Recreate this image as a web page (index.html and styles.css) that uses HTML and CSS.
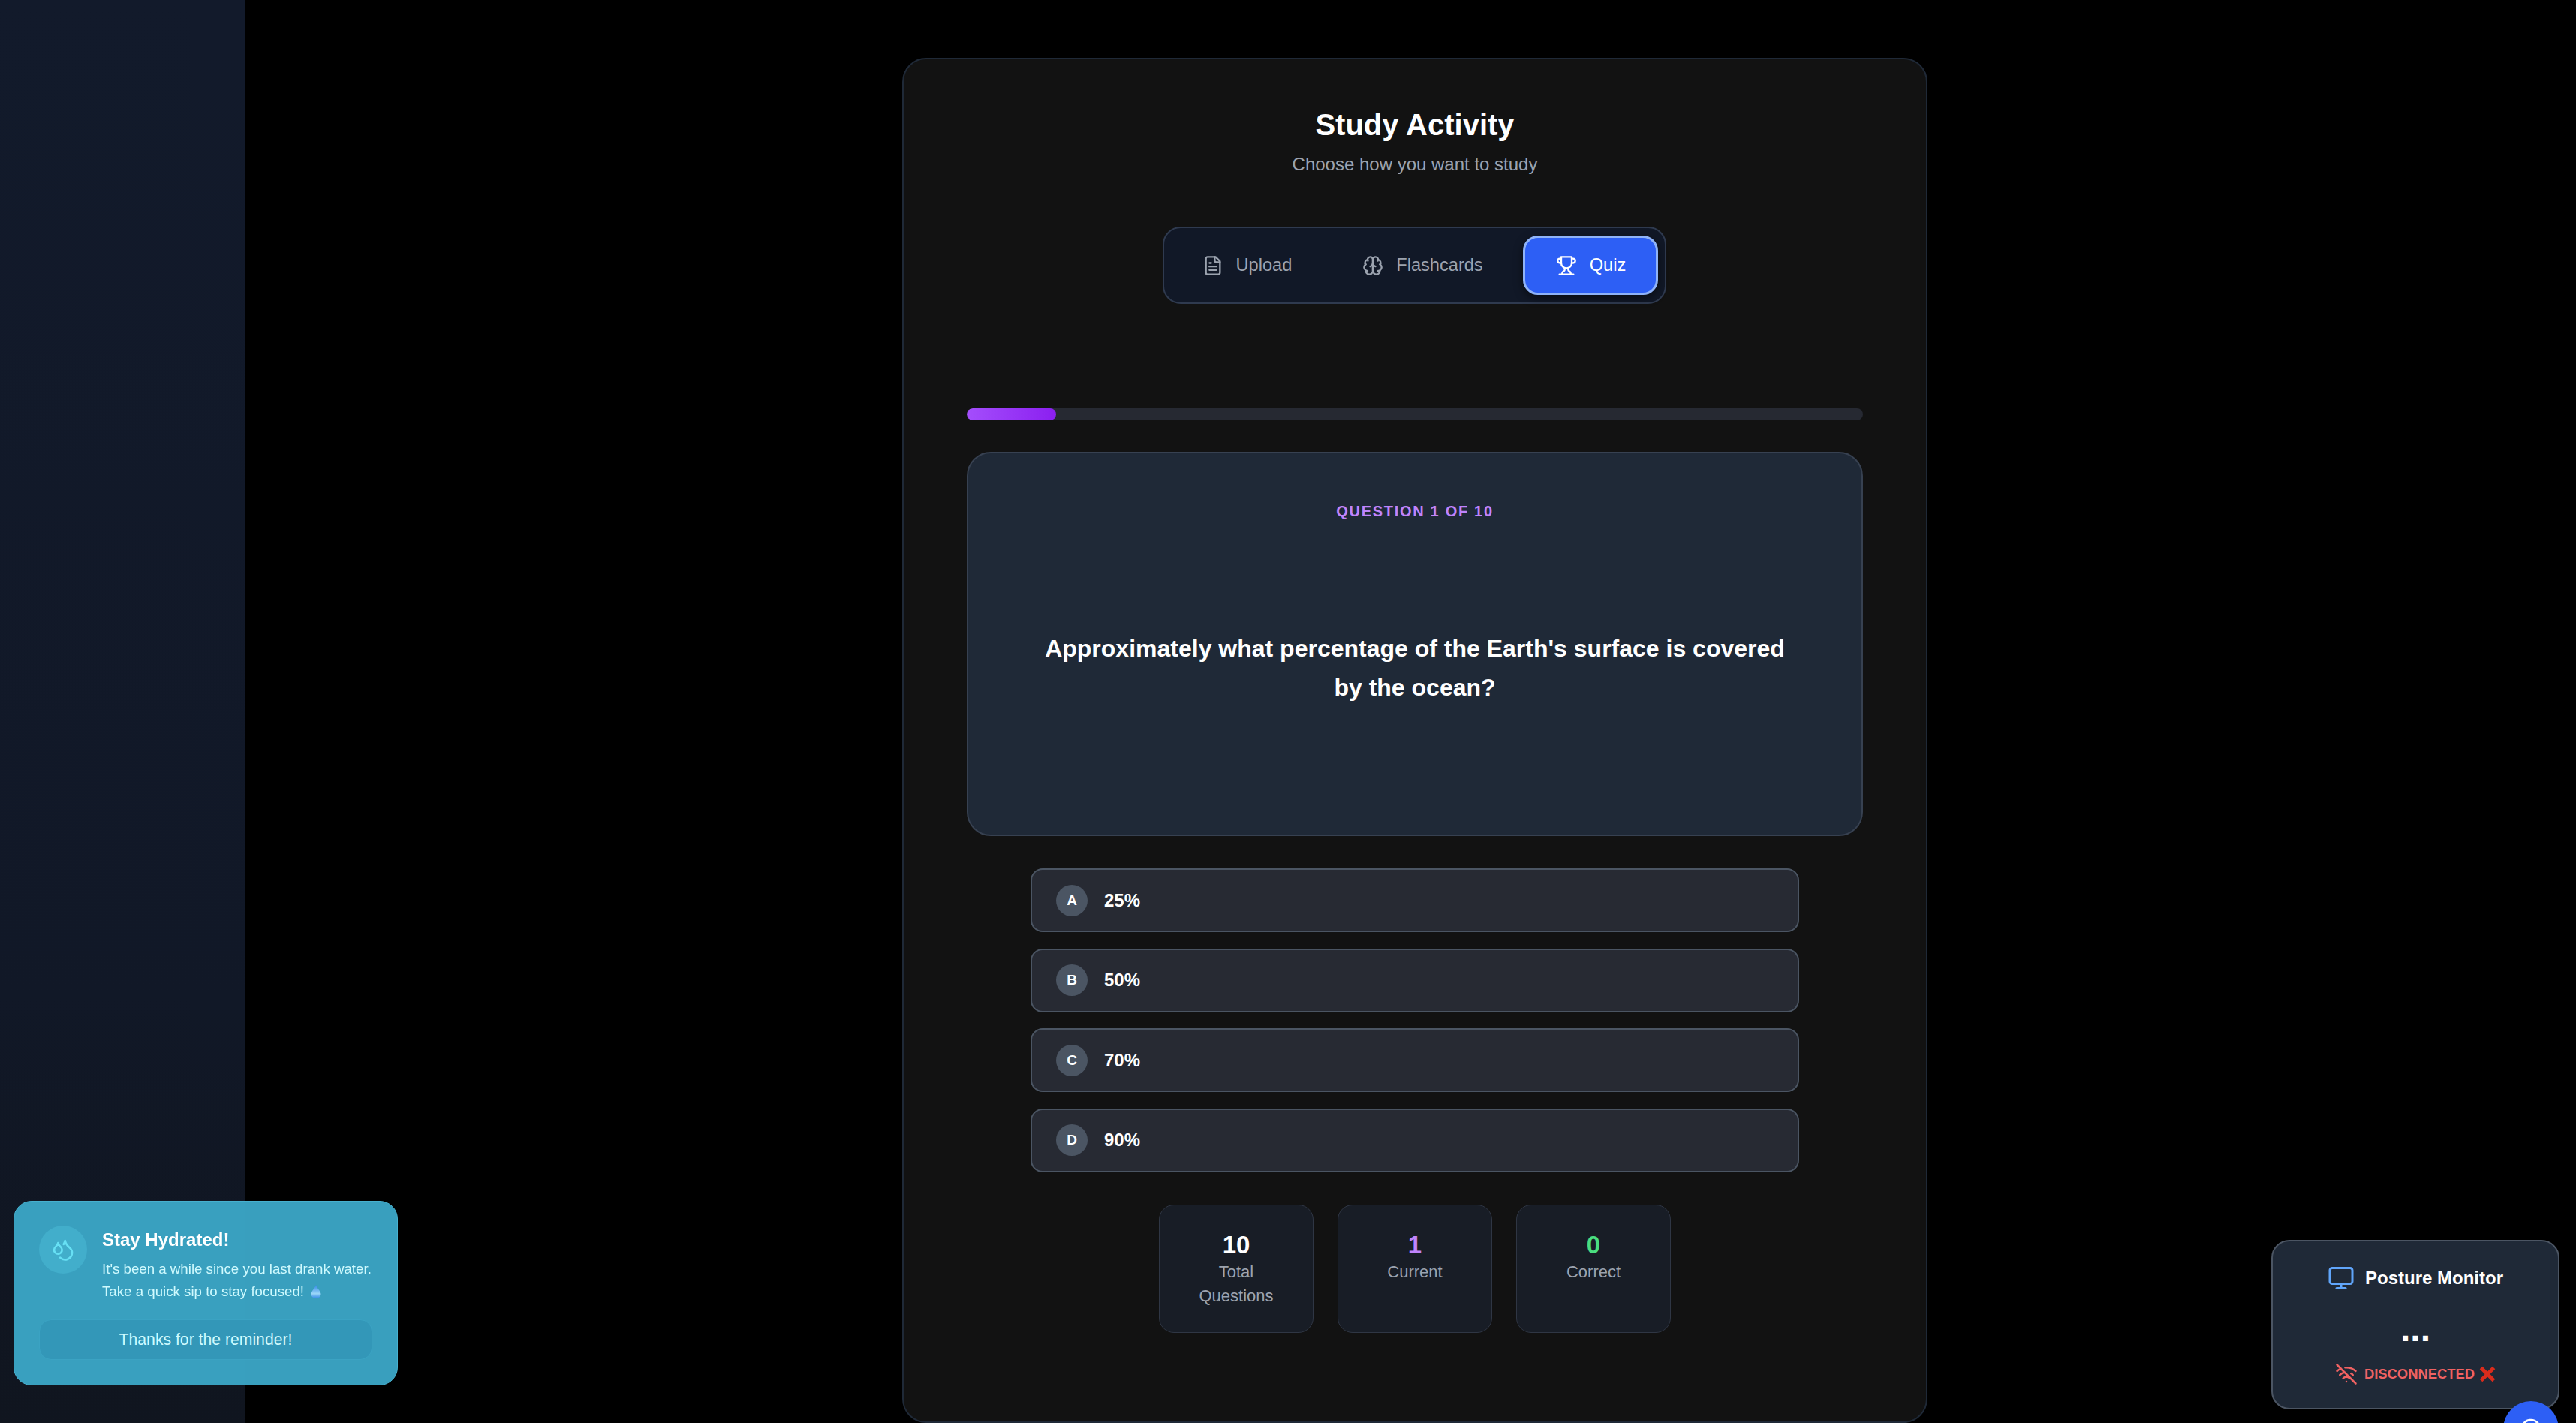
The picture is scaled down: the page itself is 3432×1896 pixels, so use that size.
FILE: index.html
```html
<!DOCTYPE html>
<html lang="en">
<head>
  <meta charset="UTF-8">
  <meta name="viewport" content="width=device-width, initial-scale=1.0">
  <title>Study Activity</title>
  <link rel="stylesheet" href="styles.css">
</head>
<body>
  <aside class="sidebar"></aside>

  <main class="main">
    <section class="panel">
      <h1 class="panel-title">Study Activity</h1>
      <p class="panel-subtitle">Choose how you want to study</p>

      <!-- Tabs -->
      <nav class="tabs">
        <button class="tab">
          <svg class="icon tab-icon" viewBox="0 0 24 24"><path d="M15 2H6a2 2 0 0 0-2 2v16a2 2 0 0 0 2 2h12a2 2 0 0 0 2-2V7Z"/><path d="M14 2v4a2 2 0 0 0 2 2h4"/><path d="M10 9H8"/><path d="M16 13H8"/><path d="M16 17H8"/></svg>
          Upload
        </button>
        <button class="tab">
          <svg class="icon tab-icon" viewBox="0 0 24 24"><path d="M12 5a3 3 0 1 0-5.997.125 4 4 0 0 0-2.526 5.77 4 4 0 0 0 .556 6.588A4 4 0 1 0 12 18Z"/><path d="M12 5a3 3 0 1 1 5.997.125 4 4 0 0 1 2.526 5.77 4 4 0 0 1-.556 6.588A4 4 0 1 1 12 18Z"/><path d="M15 13a4.5 4.5 0 0 1-3-4 4.5 4.5 0 0 1-3 4"/><path d="M17.599 6.5a3 3 0 0 0 .399-1.375"/><path d="M6.003 5.125A3 3 0 0 0 6.401 6.5"/><path d="M3.477 10.896a4 4 0 0 1 .585-.396"/><path d="M19.938 10.5a4 4 0 0 1 .585.396"/><path d="M6 18a4 4 0 0 1-1.967-.516"/><path d="M19.967 17.484A4 4 0 0 1 18 18"/></svg>
          Flashcards
        </button>
        <button class="tab tab-active">
          <svg class="icon tab-icon" viewBox="0 0 24 24"><path d="M6 9H4.5a2.5 2.5 0 0 1 0-5H6"/><path d="M18 9h1.5a2.5 2.5 0 0 0 0-5H18"/><path d="M4 22h16"/><path d="M10 14.66V17c0 .55-.47.98-.97 1.21C7.85 18.75 7 20.24 7 22"/><path d="M14 14.66V17c0 .55.47.98.97 1.21C16.15 18.75 17 20.24 17 22"/><path d="M18 2H6v7a6 6 0 0 0 12 0V2Z"/></svg>
          Quiz
        </button>
      </nav>

      <div class="progress"><div class="progress-fill" style="width: 10%;"></div></div>

      <!-- Question -->
      <div class="question-card">
        <div class="question-label">QUESTION 1 OF 10</div>
        <div class="question-body">
          <p class="question-text">Approximately what percentage of the Earth's surface is covered by the ocean?</p>
        </div>
      </div>

      <div class="options">
        <button class="option"><span class="option-letter">A</span>25%</button>
        <button class="option"><span class="option-letter">B</span>50%</button>
        <button class="option"><span class="option-letter">C</span>70%</button>
        <button class="option"><span class="option-letter">D</span>90%</button>
      </div>

      <div class="stats">
        <div class="stat"><div class="stat-value">10</div><div class="stat-label">Total Questions</div></div>
        <div class="stat"><div class="stat-value stat-purple">1</div><div class="stat-label">Current</div></div>
        <div class="stat"><div class="stat-value stat-green">0</div><div class="stat-label">Correct</div></div>
      </div>
    </section>
  </main>

  <!-- Hydration reminder -->
  <div class="toast">
    <div class="toast-top">
      <div class="toast-icon">
        <svg class="icon" viewBox="0 0 24 24"><path d="M7 16.3c2.2 0 4-1.83 4-4.05 0-1.16-.57-2.26-1.71-3.19S7.29 6.75 7 5.3c-.29 1.45-1.14 2.84-2.29 3.76S3 11.1 3 12.25c0 2.22 1.8 4.05 4 4.05z"/><path d="M12.56 6.6A10.97 10.97 0 0 0 14 3.02c.5 2.5 2 4.9 4 6.5s3 3.5 3 5.5a6.98 6.98 0 0 1-11.91 4.97"/></svg>
      </div>
      <div class="toast-copy">
        <div class="toast-title">Stay Hydrated!</div>
        <p class="toast-text">It's been a while since you last drank water.<br>Take a quick sip to stay focused!
          <svg class="drop" viewBox="0 0 14 18"><defs><linearGradient id="dropFill" x1="0" y1="0" x2="0" y2="1"><stop offset="0" stop-color="#2f86e6"/><stop offset="0.65" stop-color="#9ad6f7"/><stop offset="1" stop-color="#2f86e6"/></linearGradient></defs><path d="M7 0C6 4 .5 8.500 .5 12.300 .5 15.700 3.400 18 7 18s6.500-2.300 6.500-5.700C13.500 8.500 8 4 7 0Z" fill="url(#dropFill)"/></svg>
        </p>
      </div>
    </div>
    <button class="toast-button">Thanks for the reminder!</button>
  </div>

  <!-- Posture widget -->
  <div class="posture">
    <div class="posture-title">
      <svg class="icon posture-icon" viewBox="0 0 24 24"><rect width="20" height="14" x="2" y="3" rx="2"/><line x1="8" x2="16" y1="21" y2="21"/><line x1="12" x2="12" y1="17" y2="21"/></svg>
      Posture Monitor
    </div>
    <div class="posture-dots">...</div>
    <div class="posture-status">
      <svg class="icon wifi-icon" viewBox="0 0 24 24"><path d="M12 20h.01"/><path d="M8.500 16.429a5 5 0 0 1 7 0"/><path d="M5 12.859a10 10 0 0 1 5.170-2.690"/><path d="M19 12.859a10 10 0 0 0-2.007-1.523"/><path d="M2 8.820a15 15 0 0 1 4.177-2.643"/><path d="M22 8.820a15 15 0 0 0-11.288-3.764"/><path d="m2 2 20 20"/></svg>
      DISCONNECTED
      <svg class="cross" viewBox="0 0 22 22"><path d="M2.500 2.500l17 17M19.500 2.500l-17 17"/></svg>
    </div>
  </div>

  <button class="fab">
    <svg class="icon" viewBox="0 0 24 24"><path d="M7.900 20A9 9 0 1 0 4 16.100L2 22Z"/></svg>
  </button>
</body>
</html>
```

FILE: styles.css
```css
* {
  margin: 0;
  padding: 0;
  box-sizing: border-box;
}

body {
  display: flex;
  height: 100vh;
  overflow: hidden;
  background-color: #000;
  color: #fff;
  font-family: "Liberation Sans", Arial, sans-serif;
}

button {
  font-family: inherit;
  border: none;
  background: none;
  color: inherit;
}

.icon {
  fill: none;
  stroke: currentColor;
  stroke-width: 2;
  stroke-linecap: round;
  stroke-linejoin: round;
}

.sidebar {
  width: 327px;
  flex-shrink: 0;
  background: linear-gradient(180deg, #121a2b 0%, #111827 70%, #10151f 100%);
}

.main {
  flex: 1;
  display: flex;
  justify-content: center;
  padding: 77px 0 0 11px;
}

.panel {
  width: 1366px;
  height: 1819px;
  flex-shrink: 0;
  padding: 63px 84px 0;
  background-color: #121212;
  border: 2px solid #1f2937;
  border-radius: 32px;
}

.panel-title {
  font-size: 40px;
  line-height: 48px;
  font-weight: 700;
  text-align: center;
}

.panel-subtitle {
  margin-top: 13px;
  font-size: 24px;
  line-height: 32px;
  text-align: center;
  color: #9ca3af;
}

.tabs {
  width: 671px;
  height: 103px;
  margin: 67px 0 0 261px;
  padding: 10px 7px 10px 10px;
  display: flex;
  gap: 14px;
  background-color: #111827;
  border: 2px solid #2f3a4f;
  border-radius: 24px;
}

.tab {
  display: flex;
  align-items: center;
  gap: 17px;
  padding: 0 39.5px 0 40.5px;
  font-size: 23.6px;
  color: #9ca3af;
  border-radius: 20px;
}

.tab-icon {
  width: 28px;
  height: 28px;
}

.tab-active {
  color: #fff;
  background-color: #2d5ff5;
  border: 3px solid #8fb3f8;
  box-shadow: 0 4px 12px rgba(0, 0, 0, 0.5);
}

.progress {
  height: 16px;
  margin-top: 139px;
  background-color: #262932;
  border-radius: 8px;
  overflow: hidden;
}

.progress-fill {
  height: 100%;
  background: linear-gradient(90deg, #a44efc, #8b1ff0);
  border-radius: 8px;
}

.question-card {
  height: 512px;
  margin-top: 42px;
  padding: 63px 86px 27px;
  display: flex;
  flex-direction: column;
  background-color: #1f2937;
  border: 2px solid #374151;
  border-radius: 32px;
}

.question-label {
  font-size: 20px;
  line-height: 28px;
  font-weight: 700;
  letter-spacing: 1.7px;
  text-align: center;
  color: #c084fc;
}

.question-body {
  flex: 1;
  display: flex;
  align-items: center;
  justify-content: center;
}

.question-text {
  font-size: 32px;
  line-height: 52px;
  font-weight: 700;
  text-align: center;
}

.options {
  width: 1024px;
  margin: 43px auto 0;
  display: flex;
  flex-direction: column;
  gap: 21.5px;
}

.option {
  height: 85px;
  padding: 0 32px;
  display: flex;
  align-items: center;
  gap: 22px;
  font-size: 24px;
  font-weight: 700;
  background-color: #272a33;
  border: 2px solid #4b5563;
  border-radius: 16px;
}

.option-letter {
  width: 42px;
  height: 42px;
  display: flex;
  align-items: center;
  justify-content: center;
  font-size: 19px;
  background-color: #4b5563;
  border-radius: 50%;
}

.stats {
  margin-top: 43.5px;
  display: flex;
  justify-content: center;
  gap: 32px;
}

.stat {
  width: 206px;
  padding: 32px;
  text-align: center;
  background-color: #181d26;
  border: 1px solid #2f3644;
  border-radius: 20px;
}

.stat-value {
  font-size: 33px;
  line-height: 41px;
  font-weight: 700;
}

.stat-purple {
  color: #c084fc;
}

.stat-green {
  color: #4ade80;
}

.stat-label {
  font-size: 22px;
  line-height: 32px;
  color: #9ca3af;
}

.toast {
  position: fixed;
  left: 18px;
  top: 1600px;
  width: 512px;
  height: 246px;
  padding: 32px 33px;
  background-color: rgba(60, 168, 200, 0.95);
  border: 1px solid #47b0ce;
  border-radius: 24px;
}

.toast-top {
  display: flex;
  gap: 20px;
}

.toast-icon {
  width: 64px;
  height: 64px;
  flex-shrink: 0;
  display: flex;
  align-items: center;
  justify-content: center;
  color: #67e0f4;
  background-color: #42aecb;
  border-radius: 50%;
}

.toast-icon svg {
  width: 32px;
  height: 32px;
}

.toast-title {
  margin-top: 3px;
  font-size: 24px;
  line-height: 32px;
  font-weight: 700;
}

.toast-text {
  margin-top: 8px;
  font-size: 18.7px;
  line-height: 30px;
  white-space: nowrap;
  color: #cffafe;
}

.drop {
  width: 14px;
  height: 18px;
  margin-left: 4px;
  vertical-align: -3px;
}

.toast-button {
  width: 444px;
  height: 54px;
  margin-top: 22px;
  font-size: 21.2px;
  color: #cffafe;
  background-color: #3397b8;
  border: 1px solid #3ba3c3;
  border-radius: 16px;
}

.posture {
  position: fixed;
  left: 3026px;
  top: 1652px;
  width: 384px;
  height: 226px;
  padding-top: 33px;
  background-color: #1f2937;
  border: 2px solid #4b5563;
  border-radius: 24px;
  text-align: center;
}

.posture-title {
  display: flex;
  align-items: center;
  justify-content: center;
  gap: 14px;
  font-size: 24px;
  line-height: 32px;
  font-weight: 700;
}

.posture-icon {
  width: 36px;
  height: 36px;
  margin: -2px 0;
  color: #60a5fa;
}

.posture-dots {
  margin-top: 28px;
  font-size: 48px;
  line-height: 48px;
  font-weight: 700;
}

.posture-status {
  margin-top: 24px;
  display: flex;
  align-items: center;
  justify-content: center;
  gap: 9px;
  font-size: 18.4px;
  line-height: 24px;
  font-weight: 700;
  color: #ef6262;
}

.wifi-icon {
  width: 30px;
  height: 30px;
  margin: -3px 0;
}

.cross {
  width: 22px;
  height: 22px;
  margin-left: -3px;
  fill: none;
  stroke: #d92c1c;
  stroke-width: 5;
}

.fab {
  position: fixed;
  left: 3335px;
  top: 1867px;
  width: 74px;
  height: 74px;
  display: flex;
  align-items: center;
  justify-content: center;
  color: #fff;
  background-color: #2d5ff5;
  border-radius: 50%;
}

.fab svg {
  width: 32px;
  height: 32px;
}
```
